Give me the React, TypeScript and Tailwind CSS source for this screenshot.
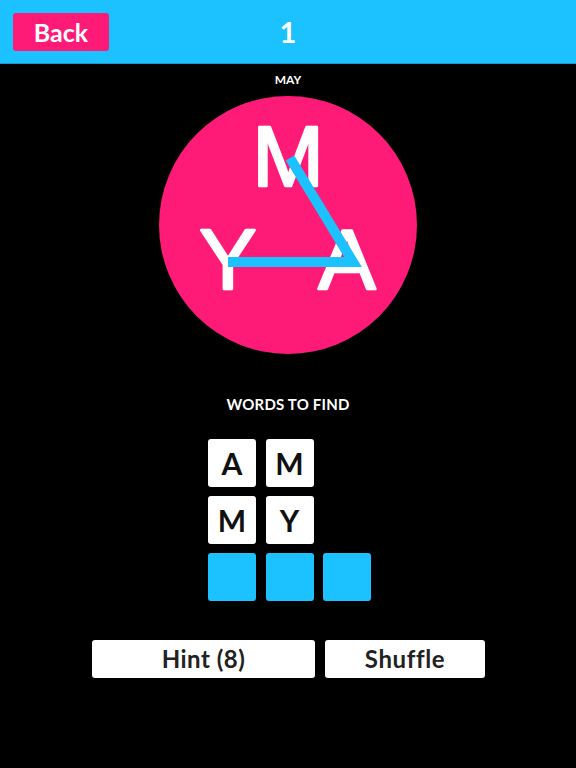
import React from 'react';

const CYAN = '#1bc2ff';

const words = [
  ['A', 'M'],
  ['M', 'Y'],
  ['', '', ''],
];

const Board: React.FC = () => (
  <div className="w-[258px] h-[258px] rounded-full bg-[#fe1a77]">
    <svg width="258" height="258" viewBox="0 0 258 258" className="block">
      <g
        fill="#ffffff"
        stroke="#ffffff"
        strokeWidth={2.5}
        strokeLinejoin="round"
        fontFamily="'Liberation Sans', Arial, sans-serif"
        fontWeight={400}
        fontSize={86}
        textAnchor="middle"
      >
        <text x="129" y="90">M</text>
        <text x="69" y="193">Y</text>
        <text x="188" y="193">A</text>
      </g>
      <polyline
        points="131,62 194,166 69,166"
        fill="none"
        stroke={CYAN}
        strokeWidth={10}
        strokeLinejoin="miter"
      />
    </svg>
  </div>
);

export default function App() {
  return (
    <div className="w-[576px] h-[768px] bg-black text-white flex flex-col items-center" style={{ fontFamily: "Lato, 'Open Sans', sans-serif" }}>
      {/* top bar */}
      <header className="w-full h-[64px] shrink-0 bg-[#1bc2ff] border-b border-[#1697c9] grid grid-cols-[1fr_auto_1fr] items-center">
        <div className="pl-[13px] pt-px">
          <button className="w-[96px] h-[38px] rounded-[3px] bg-[#fe1a77] text-white text-[25px] font-bold leading-none flex items-center justify-center">
            Back
          </button>
        </div>
        <div className="text-[29px] font-bold leading-none pb-px">1</div>
        <div />
      </header>

      <div className="mt-2 text-[12px] leading-4 font-bold">MAY</div>

      <div className="mt-2">
        <Board />
      </div>

      <div className="mt-[40px] text-[15px] leading-5 font-bold tracking-[0.2px]">WORDS TO FIND</div>

      <div className="mt-[25px] ml-[3px] w-[163px] flex flex-col gap-[9px]">
        {words.map((row, i) => (
          <div key={i} className="flex gap-[9.5px]">
            {row.map((ch, j) => (
              <div
                key={j}
                className={
                  ch
                    ? 'w-[48px] h-[48px] rounded-[3px] bg-white text-[#111] text-[30px] font-bold flex items-center justify-center leading-none'
                    : 'w-[48px] h-[48px] rounded-[3px] bg-[#1bc2ff]'
                }
              >
                {ch}
              </div>
            ))}
          </div>
        ))}
      </div>

      <div className="mt-[39px] ml-px flex gap-[10px]">
        <button className="w-[223px] h-[38px] rounded-[3px] bg-white text-[#222] text-[24px] font-bold tracking-[0.5px] leading-none flex items-center justify-center">
          Hint (8)
        </button>
        <button className="w-[160px] h-[38px] rounded-[3px] bg-white text-[#222] text-[24px] font-bold tracking-[0.6px] leading-none flex items-center justify-center">
          Shuffle
        </button>
      </div>
    </div>
  );
}
